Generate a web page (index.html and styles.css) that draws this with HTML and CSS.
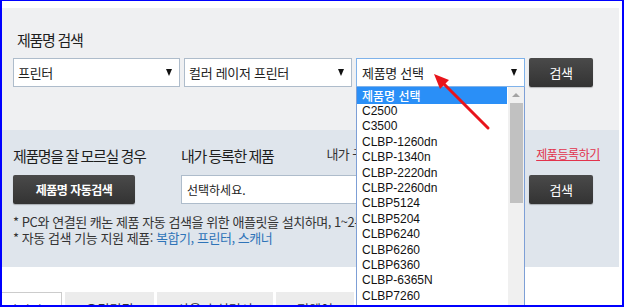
FILE: index.html
```html
<!DOCTYPE html>
<html lang="ko">
<head>
    <meta charset="UTF-8">
    <meta name="viewport" content="width=device-width, initial-scale=1.0">
    <title>제품명 검색</title>
    <link rel="stylesheet" href="styles.css">
</head>
<body>
  <div class="frame">
    <div class="search">
        <h2 class="title">제품명 검색</h2>
        <div class="search-row">
            <div class="select w1">프린터</div>
            <div class="select w2">컬러 레이저 프린터</div>
            <div class="select w3 is-open">
                제품명 선택
                <div class="listbox">
                    <div class="opt sel">제품명 선택</div>
                    <div class="opt">C2500</div>
                    <div class="opt">C3500</div>
                    <div class="opt">CLBP-1260dn</div>
                    <div class="opt">CLBP-1340n</div>
                    <div class="opt">CLBP-2220dn</div>
                    <div class="opt">CLBP-2260dn</div>
                    <div class="opt">CLBP5124</div>
                    <div class="opt">CLBP5204</div>
                    <div class="opt">CLBP6240</div>
                    <div class="opt">CLBP6260</div>
                    <div class="opt">CLBP6360</div>
                    <div class="opt">CLBP-6365N</div>
                    <div class="opt">CLBP7260</div>
                    <div class="opt">CLBP7660</div>
                    <div class="scrollbar">
                        <div class="scroll-up"></div>
                        <div class="scroll-thumb"></div>
                    </div>
                </div>
            </div>
            <div class="btn">검색</div>
        </div>
    </div>

    <div class="auto">
        <div class="auto-cols">
            <div class="col-auto">
                <h3 class="sub-title">제품명을 잘 모르실 경우</h3>
                <div class="btn btn-wide">제품명 자동검색</div>
            </div>
            <div class="col-mine">
                <div class="mine-head">
                    <h3 class="sub-title">내가 등록한 제품</h3>
                    <span class="bought">내가 구매한 제품</span>
                    <a class="reg-link" href="#">제품등록하기</a>
                </div>
                <div class="mine-row">
                    <div class="input">선택하세요.</div>
                    <div class="btn">검색</div>
                </div>
            </div>
        </div>
        <div class="notes">
            <p>* PC와 연결된 캐논 제품 자동 검색을 위한 애플릿을 설치하며, 1~2분 정도 소요될 수 있습니다.</p>
            <p>* 자동 검색 기능 지원 제품: <span class="blue">복합기, 프린터, 스캐너</span></p>
        </div>
    </div>

    <div class="tabs">
        <div class="tab on">드라이버</div>
        <div class="tab t2">유틸리티</div>
        <div class="tab t3">사용자 설명서</div>
        <div class="tab t4">펌웨어</div>
        <div class="tab t5">FAQ</div>
    </div>

    <!-- red pointer over the open select -->
    <svg class="pointer" width="624" height="307" viewBox="0 0 624 307">
        <line x1="486" y1="127" x2="440" y2="81" stroke="#e8141b" stroke-width="3" stroke-linecap="round"/>
        <polygon points="432,73 447,79 438,88" fill="#e8141b"/>
    </svg>
  </div>
</body>
</html>
```

FILE: styles.css
```css
html, body {
    margin: 0;
    padding: 0;
    background-color: #fff;
}
body {
    font-family: "Noto Sans CJK KR", "Liberation Sans", sans-serif;
    color: #222;
}
.frame {
    position: relative;
    box-sizing: border-box;
    width: 624px;
    height: 307px;
    overflow: hidden;
    border: solid #0000ff;
    border-width: 1px 2px 2px 2px;
    padding: 7px 3px 0 0;
    background-color: #fff;
}

/* top search block */
.search {
    box-sizing: border-box;
    height: 122px;
    background-color: #eff0f2;
    padding: 22px 0 0 11px;
}
.title {
    margin: 0 0 8px 4px;
    font-size: 15px;
    line-height: 20px;
    font-weight: normal;
    letter-spacing: -1.3px;
    color: #1e1e1e;
}
.search-row {
    display: flex;
    gap: 4px;
}
.select {
    position: relative;
    box-sizing: border-box;
    height: 29px;
    border: 1px solid #aebccb;
    background-color: #fff;
    padding: 0 7px 0 4px;
    display: flex;
    align-items: center;
    justify-content: space-between;
    font-size: 13px;
    letter-spacing: -0.3px;
    color: #222;
}
.select::after {
    content: "";
    border-style: solid;
    border-width: 7px 3.5px 0;
    border-color: #111 transparent transparent;
}
.w1 { width: 167px; }
.w2 { width: 168px; }
.w3 { width: 169px; padding-left: 5px; }
.is-open {
    border-color: #7fb2ea;
}
.btn {
    box-sizing: border-box;
    width: 64px;
    height: 29px;
    flex-shrink: 0;
    border-radius: 2px;
    background: linear-gradient(#4a4a4a, #333);
    box-shadow: 0 1px 1px rgba(0,0,0,0.25);
    color: #fff;
    font-size: 13px;
    letter-spacing: -0.5px;
    display: flex;
    justify-content: center;
    align-items: center;
}

/* open listbox */
.listbox {
    position: absolute;
    top: calc(100% + 1px);
    left: -1px;
    width: 169px;
    height: 240px;
    box-sizing: border-box;
    border: 1px solid #7d9fd6;
    border-top: none;
    background-color: #fff;
    font-family: "Liberation Sans", "Noto Sans CJK KR", sans-serif;
    font-size: 12px;
    letter-spacing: 0;
    color: #111;
    z-index: 2;
}
.opt {
    height: 15.4px;
    line-height: 15.4px;
    padding-left: 5px;
    margin-right: 17px;
}
.opt.sel {
    height: 17px;
    line-height: 17px;
    background-color: #2a8ff7;
    color: #fff;
    font-family: "Noto Sans CJK KR", sans-serif;
    font-weight: 500;
}
.scrollbar {
    position: absolute;
    top: 0;
    right: 0;
    width: 16px;
    height: 100%;
    background-color: #f0f0f0;
}
.scroll-up {
    width: 0;
    margin: 6px auto 0;
    border-style: solid;
    border-width: 0 4px 4px;
    border-color: transparent transparent #a3a3a3;
}
.scroll-thumb {
    margin: 6px 1px 0 2px;
    height: 100px;
    background-color: #c1c1c1;
}

/* auto search block */
.auto {
    box-sizing: border-box;
    height: 137px;
    background-color: #dfe5ec;
    padding: 16px 0 0 11px;
}
.auto-cols {
    display: flex;
}
.col-auto {
    width: 168px;
}
.col-mine {
    flex: 1;
}
.sub-title {
    margin: 0 0 9px;
    font-size: 15px;
    line-height: 20px;
    font-weight: normal;
    letter-spacing: -1.4px;
    color: #1e1e1e;
}
.btn-wide {
    width: 122px;
    font-size: 12px;
    font-weight: bold;
}
.mine-head {
    display: flex;
    align-items: flex-start;
    padding-right: 19px;
}
.bought {
    margin-left: 53px;
    font-size: 13px;
    line-height: 16px;
    letter-spacing: -0.6px;
    color: #333;
}
.reg-link {
    margin-left: auto;
    font-size: 12px;
    line-height: 16px;
    letter-spacing: -0.4px;
    color: #e2334c;
}
.mine-row {
    display: flex;
    gap: 8px;
    padding-right: 26px;
}
.input {
    flex: 1;
    box-sizing: border-box;
    height: 29px;
    border: 1px solid #aebccb;
    background-color: #fff;
    padding-left: 5px;
    font-size: 12px;
    line-height: 27px;
    letter-spacing: 0;
}
.notes {
    margin-top: 10px;
    font-size: 13px;
    line-height: 16px;
    letter-spacing: -0.45px;
    color: #333;
}
.notes p {
    margin: 0;
    white-space: nowrap;
}
.blue {
    color: #2f74b8;
}

/* tabs under the blocks */
.tabs {
    display: flex;
    gap: 3px;
    margin: 25px 0 0 -28px;
}
.tab {
    box-sizing: border-box;
    height: 34px;
    padding-top: 8px;
    background-color: #ececec;
    font-size: 13px;
    line-height: 18px;
    text-align: center;
    color: #333;
}
.tab.on {
    width: 88px;
    background-color: #fff;
    border: 1px solid #ccc;
    border-bottom: none;
}
.t2 { width: 89px; }
.t3 { width: 116px; }
.t4 { width: 78px; }
.t5 { width: 90px; }

.pointer {
    position: absolute;
    top: 0;
    left: 0;
    z-index: 3;
    pointer-events: none;
}
```
